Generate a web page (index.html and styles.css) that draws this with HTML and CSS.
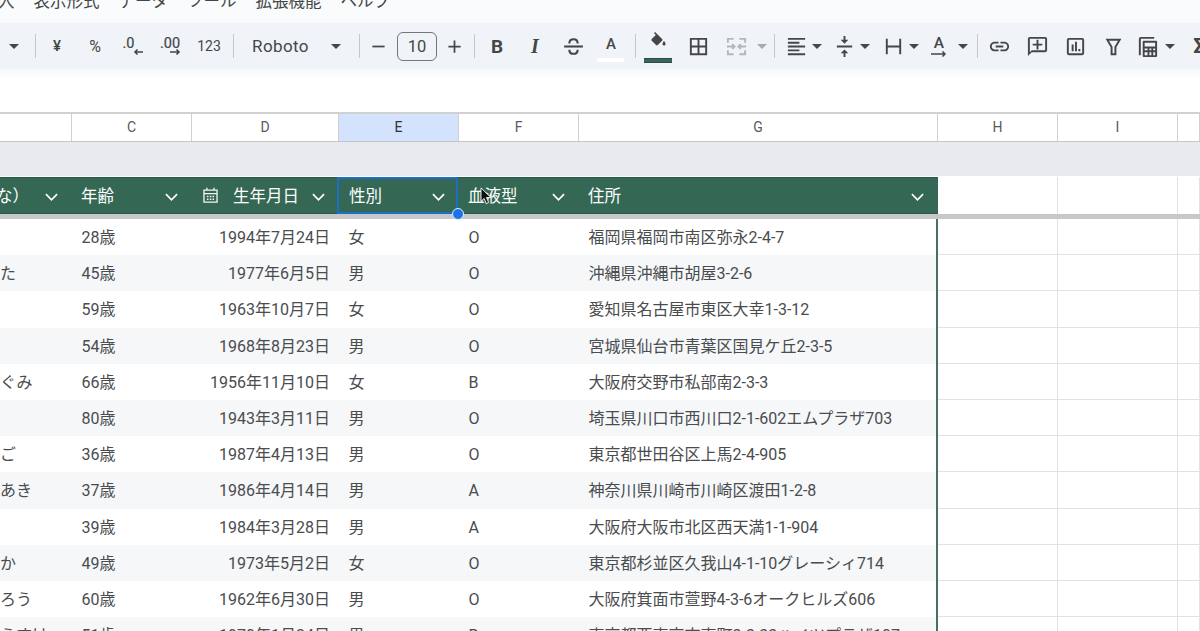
FILE: index.html
```html
<!DOCTYPE html>
<html lang="ja">
<head>
  <meta charset="UTF-8">
  <meta name="viewport" content="width=device-width, initial-scale=1.0">
  <title>スプレッドシート</title>
  <link rel="stylesheet" href="styles.css">
</head>
<body>
  <!-- メニュー -->
  <div class="menubar">
    <span class="menu-first">入</span>
    <span>表示形式</span>
    <span>データ</span>
    <span>ツール</span>
    <span>拡張機能</span>
    <span>ヘルプ</span>
  </div>

  <!-- ツールバー -->
  <div class="toolbar">
    <svg class="caret" viewBox="0 0 12 6"><path d="M0 0h12L6 6z"/></svg>
    <div class="sep ml-15"></div>

    <div class="btn txt-yen">¥</div>
    <div class="btn txt-pct">%</div>
    <div class="btn">
      <svg class="num-ico" viewBox="0 0 24 24">
        <text x="1.500" y="14" class="svg-num">.0</text>
        <path class="line thin" d="M22 18h-8M16.500 15.500L14 18l2.500 2.500"/>
      </svg>
    </div>
    <div class="btn">
      <svg class="num-ico wide" viewBox="0 0 28 24">
        <text x="3" y="14" class="svg-num">.00</text>
        <path class="line thin" d="M13 18h9M19.500 15.500L22 18l-2.500 2.500"/>
      </svg>
    </div>
    <div class="btn txt-num">123</div>
    <div class="sep ml-5"></div>

    <div class="font-name">Roboto</div>
    <svg class="caret" viewBox="0 0 12 6"><path d="M0 0h12L6 6z"/></svg>
    <div class="sep ml-17"></div>

    <div class="btn-minus"><svg class="ico small" viewBox="0 0 24 24"><path d="M5 11h14v2H5z"/></svg></div>
    <div class="size-box">10</div>
    <div class="btn-plus"><svg class="ico small" viewBox="0 0 24 24"><path d="M19 13h-6v6h-2v-6H5v-2h6V5h2v6h6z"/></svg></div>
    <div class="sep ml-3"></div>

    <div class="btn txt-bold">B</div>
    <div class="btn txt-italic">I</div>
    <div class="btn">
      <svg class="ico strike" viewBox="0 0 24 24">
        <path d="M3 11h18v2H3z"/>
        <path class="line" d="M8 9c0-2.500 1.800-4 4-4s4 1.500 4 4M8 15c0 2.500 1.800 4 4 4s4-1.500 4-4"/>
      </svg>
    </div>
    <div class="btn txt-color">
      <span>A</span>
      <i class="white-bar"></i>
    </div>
    <div class="sep ml-5"></div>

    <div class="btn btn-fill">
      <svg class="ico fill-ico" viewBox="0 0 24 24"><path d="M16.560 8.940L7.620 0 6.210 1.410l2.380 2.380-5.150 5.150c-.59.59-.59 1.540 0 2.120l5.500 5.500c.29.29.68.44 1.060.44s.77-.15 1.060-.44l5.500-5.500c.59-.58.59-1.530 0-2.120zM19 11.500s-2 2.170-2 3.500c0 1.100.9 2 2 2s2-.9 2-2c0-1.330-2-3.500-2-3.500z"/></svg>
      <i class="green-bar"></i>
    </div>
    <div class="btn ml-2"><svg class="ico" viewBox="0 0 24 24"><path d="M3 3v18h18V3H3zm8 16H5v-6h6v6zm0-8H5V5h6v6zm8 8h-6v-6h6v6zm0-8h-6V5h6v6z"/></svg></div>
    <div class="btn">
      <svg class="ico off" viewBox="0 0 24 24">
        <path class="line" d="M9 4H3v4M15 4h6v4M9 20H3v-4M15 20h6v-4M3 11v2M21 11v2M4 12h6M7.500 9.500l2.500 2.500-2.500 2.500M20 12h-6M16.500 9.500L14 12l2.500 2.500"/>
      </svg>
    </div>
    <svg class="caret off ml-1" viewBox="0 0 12 6"><path d="M0 0h12L6 6z"/></svg>
    <div class="sep ml-6"></div>

    <div class="btn-narrow ml-5"><svg class="ico" viewBox="0 0 24 24"><path d="M15 15H3v2h12v-2zm0-8H3v2h12V7zM3 13h18v-2H3v2zm0 8h18v-2H3v2zM3 3v2h18V3H3z"/></svg></div>
    <svg class="caret ml-2" viewBox="0 0 12 6"><path d="M0 0h12L6 6z"/></svg>
    <div class="btn-narrow ml-8"><svg class="ico" viewBox="0 0 24 24"><path d="M8 19h3v4h2v-4h3l-4-4-4 4zm8-14h-3V1h-2v4H8l4 4 4-4zM4 11v2h16v-2H4z"/></svg></div>
    <svg class="caret ml-2" viewBox="0 0 12 6"><path d="M0 0h12L6 6z"/></svg>
    <div class="btn-narrow ml-9"><svg class="ico" viewBox="0 0 24 24"><path d="M4 4h2v16H4zM18 4h2v16h-2zM6 11h12v2H6z"/></svg></div>
    <svg class="caret ml-2" viewBox="0 0 12 6"><path d="M0 0h12L6 6z"/></svg>
    <div class="btn-narrow ml-6 txt-rotate">
      <span>A</span>
      <svg class="rotate-arrow" viewBox="0 0 16 6"><path class="line" d="M0 3h14M11.500 .5L14 3l-2.500 2.500"/></svg>
    </div>
    <svg class="caret ml-5" viewBox="0 0 12 6"><path d="M0 0h12L6 6z"/></svg>
    <div class="sep ml-8 tight"></div>

    <div class="btn"><svg class="ico" viewBox="0 0 24 24"><path d="M3.900 12c0-1.710 1.390-3.100 3.100-3.100h4V7H7c-2.760 0-5 2.240-5 5s2.240 5 5 5h4v-1.900H7c-1.710 0-3.100-1.390-3.100-3.100zM8 13h8v-2H8v2zm9-6h-4v1.900h4c1.710 0 3.100 1.390 3.100 3.100s-1.390 3.100-3.100 3.100h-4V17h4c2.760 0 5-2.240 5-5s-2.240-5-5-5z"/></svg></div>
    <div class="btn"><svg class="ico" viewBox="0 0 24 24"><path d="M20 2H4c-1.100 0-2 .9-2 2v18l4-4h14c1.100 0 2-.9 2-2V4c0-1.100-.9-2-2-2zm0 14H6l-2 2V4h16v12z"/><path d="M11 5h2v4h4v2h-4v4h-2v-4H7V9h4z"/></svg></div>
    <div class="btn"><svg class="ico" viewBox="0 0 24 24"><path d="M19 3H5c-1.100 0-2 .9-2 2v14c0 1.100.9 2 2 2h14c1.100 0 2-.9 2-2V5c0-1.100-.9-2-2-2zm0 16H5V5h14v14z"/><path d="M8 10h2v7H8zM11.500 7h2v10h-2zM15 14.500h2V17h-2z"/></svg></div>
    <div class="btn"><svg class="ico" viewBox="0 0 24 24"><path class="line-2" d="M5.500 5h13L14 12.500V20h-4v-7.500z"/></svg></div>
    <div class="btn-narrow ml-2">
      <svg class="ico" viewBox="0 0 24 24">
        <path d="M3 21V4c0-1.100.9-2 2-2h14v2H5v17z"/>
        <path d="M8 6h13c.6 0 1 .4 1 1v15c0 .6-.4 1-1 1H8c-.6 0-1-.4-1-1V7c0-.6.4-1 1-1zm1 2v4h11V8zm0 6v2h3v-2zm5 0v2h2v-2zm4 0v2h2v-2zM9 18v3h3v-3zm5 0v3h2v-3zm4 0v3h2v-3z" fill-rule="evenodd"/>
      </svg>
    </div>
    <svg class="caret ml-4" viewBox="0 0 12 6"><path d="M0 0h12L6 6z"/></svg>
    <div class="btn txt-sigma">Σ</div>
  </div>

  <div class="formula-bar"></div>

  <!-- 列見出し -->
  <div class="cols col-head">
    <div></div>
    <div>C</div>
    <div>D</div>
    <div class="on">E</div>
    <div>F</div>
    <div>G</div>
    <div>H</div>
    <div>I</div>
    <div></div>
  </div>

  <div class="band"></div>

  <!-- テーブル見出し -->
  <div class="cols table-head">
    <div class="th"><span class="cut">な）</span><svg class="chev" viewBox="0 0 14 8"><path d="M1 1l6 6 6-6"/></svg></div>
    <div class="th">年齢<svg class="chev" viewBox="0 0 14 8"><path d="M1 1l6 6 6-6"/></svg></div>
    <div class="th">
      <svg class="cal" viewBox="0 0 16 16"><path d="M2.500 3.500h11v10h-11zM2.500 6.500h11M5 1.500v2M11 1.500v2"/><path class="dots" d="M5 8.800h1.300M7.400 8.800h1.300M9.700 8.800h1.300M5 11.200h1.300M7.400 11.200h1.300M9.700 11.200h1.300"/></svg>
      生年月日<svg class="chev" viewBox="0 0 14 8"><path d="M1 1l6 6 6-6"/></svg>
    </div>
    <div class="th selected">性別<svg class="chev" viewBox="0 0 14 8"><path d="M1 1l6 6 6-6"/></svg><i class="handle"></i></div>
    <div class="th">血液型<svg class="chev" viewBox="0 0 14 8"><path d="M1 1l6 6 6-6"/></svg>
      <svg class="pointer" viewBox="0 0 12 20"><path d="M1 1v15l3.500-3.300 2.300 5.600 2.700-1.100-2.400-5.500H12z"/></svg>
    </div>
    <div class="th">住所<svg class="chev" viewBox="0 0 14 8"><path d="M1 1l6 6 6-6"/></svg></div>
    <div class="th-rest"></div>
    <div class="th-rest"></div>
    <div class="th-rest"></div>
  </div>
  <div class="freeze"></div>

  <!-- データ行 -->
  <div class="rows">
    <div class="cols row">
      <div class="name"></div><div>28歳</div><div class="date">1994年7月24日</div><div>女</div><div>O</div><div class="addr">福岡県福岡市南区弥永2-4-7</div><div class="g"></div><div class="g"></div><div class="g"></div>
    </div>
    <div class="cols row">
      <div class="name">た</div><div>45歳</div><div class="date">1977年6月5日</div><div>男</div><div>O</div><div class="addr">沖縄県沖縄市胡屋3-2-6</div><div class="g"></div><div class="g"></div><div class="g"></div>
    </div>
    <div class="cols row">
      <div class="name"></div><div>59歳</div><div class="date">1963年10月7日</div><div>女</div><div>O</div><div class="addr">愛知県名古屋市東区大幸1-3-12</div><div class="g"></div><div class="g"></div><div class="g"></div>
    </div>
    <div class="cols row">
      <div class="name"></div><div>54歳</div><div class="date">1968年8月23日</div><div>男</div><div>O</div><div class="addr">宮城県仙台市青葉区国見ケ丘2-3-5</div><div class="g"></div><div class="g"></div><div class="g"></div>
    </div>
    <div class="cols row">
      <div class="name">ぐみ</div><div>66歳</div><div class="date">1956年11月10日</div><div>女</div><div>B</div><div class="addr">大阪府交野市私部南2-3-3</div><div class="g"></div><div class="g"></div><div class="g"></div>
    </div>
    <div class="cols row">
      <div class="name"></div><div>80歳</div><div class="date">1943年3月11日</div><div>男</div><div>O</div><div class="addr">埼玉県川口市西川口2-1-602エムプラザ703</div><div class="g"></div><div class="g"></div><div class="g"></div>
    </div>
    <div class="cols row">
      <div class="name">ご</div><div>36歳</div><div class="date">1987年4月13日</div><div>男</div><div>O</div><div class="addr">東京都世田谷区上馬2-4-905</div><div class="g"></div><div class="g"></div><div class="g"></div>
    </div>
    <div class="cols row">
      <div class="name">あき</div><div>37歳</div><div class="date">1986年4月14日</div><div>男</div><div>A</div><div class="addr">神奈川県川崎市川崎区渡田1-2-8</div><div class="g"></div><div class="g"></div><div class="g"></div>
    </div>
    <div class="cols row">
      <div class="name"></div><div>39歳</div><div class="date">1984年3月28日</div><div>男</div><div>A</div><div class="addr">大阪府大阪市北区西天満1-1-904</div><div class="g"></div><div class="g"></div><div class="g"></div>
    </div>
    <div class="cols row">
      <div class="name">か</div><div>49歳</div><div class="date">1973年5月2日</div><div>女</div><div>O</div><div class="addr">東京都杉並区久我山4-1-10グレーシィ714</div><div class="g"></div><div class="g"></div><div class="g"></div>
    </div>
    <div class="cols row">
      <div class="name">ろう</div><div>60歳</div><div class="date">1962年6月30日</div><div>男</div><div>O</div><div class="addr">大阪府箕面市萱野4-3-6オークヒルズ606</div><div class="g"></div><div class="g"></div><div class="g"></div>
    </div>
    <div class="cols row">
      <div class="name">うすけ</div><div>51歳</div><div class="date">1970年1月24日</div><div>男</div><div>B</div><div class="addr">東京都西東京市東町3-3-33ハイツプラザ107</div><div class="g"></div><div class="g"></div><div class="g"></div>
    </div>
  </div>
</body>
</html>
```

FILE: styles.css
```css
* {
  box-sizing: border-box;
}

html, body {
  height: 100%;
}

body {
  margin: 0;
  overflow: hidden;
  background: #fff;
  color: #444746;
  font-family: Roboto, "Noto Sans CJK JP", sans-serif;
}

/* メニュー */
.menubar {
  display: flex;
  align-items: flex-end;
  gap: 19px;
  height: 23px;
  padding-bottom: 11px;
  overflow: hidden;
  background: #f9fbfd;
  font-size: 16.500px;
  line-height: 20px;
}

.menu-first {
  margin-left: -2px;
}

/* ツールバー */
.toolbar {
  display: flex;
  align-items: center;
  height: 46px;
  padding-left: 8px;
  overflow: hidden;
  background: #f0f4f9;
}

.toolbar svg {
  flex: none;
  fill: #444746;
}

.toolbar .line,
.toolbar .line-2 {
  fill: none;
  stroke: #444746;
  stroke-width: 2;
}

.toolbar .line.thin {
  stroke-width: 1.600;
}

.caret {
  width: 12px;
  height: 5px;
  padding: 0 1px;
}

.off.caret path {
  fill: #a8abae;
}

.toolbar .off .line {
  stroke: #b4b7ba;
}

.sep {
  flex: none;
  width: 1px;
  height: 24px;
  margin-right: 3px;
  background: #c7c7c7;
}

.sep.tight {
  margin-right: 2px;
}

.ml-1 { margin-left: 1px; }
.ml-2 { margin-left: 2px; }
.ml-3 { margin-left: 3px; }
.ml-4 { margin-left: 4px; }
.ml-5 { margin-left: 5px; }
.ml-6 { margin-left: 6px; }
.ml-8 { margin-left: 8px; }
.ml-9 { margin-left: 9px; }
.ml-15 { margin-left: 15px; margin-right: 2px; }
.ml-17 { margin-left: 17px; margin-right: 2px; }

.btn,
.btn-narrow,
.btn-minus,
.btn-plus {
  position: relative;
  flex: none;
  display: flex;
  align-items: center;
  justify-content: center;
  width: 38px;
  height: 34px;
}

.btn-narrow {
  width: 26px;
}

.btn-minus {
  width: 32px;
}

.btn-plus {
  width: 34px;
}

.ico {
  width: 23px;
  height: 23px;
}

.ico.small {
  width: 21px;
  height: 21px;
}

.ico.strike {
  width: 25px;
  height: 25px;
}

.num-ico {
  width: 24px;
  height: 24px;
}

.num-ico.wide {
  width: 28px;
}

.svg-num {
  font-size: 14.500px;
  fill: #444746;
  stroke: #444746;
  stroke-width: 0.200;
}

.txt-yen {
  font-size: 15px;
  font-weight: 500;
}

.txt-pct {
  font-size: 16px;
}

.txt-num {
  font-size: 14px;
}

.font-name {
  flex: none;
  width: 78px;
  margin-left: 15px;
  font-size: 17px;
  letter-spacing: 0.4px;
}

.size-box {
  flex: none;
  width: 40px;
  height: 29px;
  margin-left: 3px;
  border: 1px solid #747775;
  border-radius: 6px;
  font-size: 16.500px;
  line-height: 27px;
  text-align: center;
}

.txt-bold {
  font-size: 19px;
  font-weight: 700;
}

.txt-italic {
  font-family: "Liberation Serif", serif;
  font-size: 20px;
  font-style: italic;
  font-weight: 700;
}

.txt-color {
  flex-direction: column;
  font-size: 15px;
  font-weight: 500;
  line-height: 16px;
}

.txt-color span {
  margin-top: -4px;
}

.white-bar {
  position: absolute;
  left: 5px;
  top: 29px;
  width: 27px;
  height: 4px;
  background: #fff;
}

.toolbar .fill-ico {
  position: absolute;
  left: 10px;
  top: 3px;
  width: 19px;
  height: 19px;
}

.green-bar {
  position: absolute;
  left: 5px;
  top: 29px;
  width: 28px;
  height: 5px;
  border-top: 1px solid #33484a;
  border-bottom: 1px solid #33484a;
  background: #356854;
}

.txt-rotate {
  flex-direction: column;
  font-size: 15.500px;
  font-weight: 500;
  line-height: 15px;
}

.rotate-arrow {
  width: 16px;
  height: 6px;
}

.toolbar .rotate-arrow .line {
  stroke-width: 1.500;
}

.txt-sigma {
  padding-left: 8px;
  font-size: 20px;
  font-weight: 700;
}

.formula-bar {
  height: 43px;
  background: linear-gradient(#f5f8fb, #fff 9px);
}

/* 列 */
.cols {
  display: grid;
  grid-template-columns: 72px 120px 147px 120px 120px 359px 120px 120px 22px;
}

.col-head {
  height: 30px;
  border-top: 2px solid #d0d2d2;
  border-bottom: 1px solid #c4c7c5;
  font-size: 14px;
  line-height: 27px;
  text-align: center;
  color: #575a5c;
}

.col-head div {
  border-right: 1px solid #cfd1d1;
}

.col-head .on {
  background: #d3e3fd;
  color: #2d3136;
}

.band {
  height: 35px;
  border-bottom: 1px solid #fff;
  background: #e8eaed;
}

/* テーブル見出し */
.table-head {
  height: 37px;
  grid-template-rows: 37px;
  font-size: 16.500px;
  line-height: 1;
  color: #fff;
}

.th {
  position: relative;
  display: flex;
  align-items: center;
  padding-top: 4px;
  padding-left: 9px;
  background: #356854;
  border-top: 1px solid #2c5a48;
  border-bottom: 1px solid #2c5a48;
}

.th-rest {
  border-right: 1px solid #e1e3e3;
}

.cut {
  margin-left: -13px;
}

.chev {
  position: absolute;
  right: 14px;
  top: 15px;
  width: 13px;
  height: 8px;
  fill: none;
  stroke: #fff;
  stroke-width: 1.800;
}

.cal {
  width: 19px;
  height: 19px;
  margin-top: -4px;
  margin-right: 13px;
  fill: none;
  stroke: #f2f6f4;
  stroke-width: 1.100;
}

.cal .dots {
  stroke-width: 1.200;
}

.selected {
  margin-left: -2px;
  margin-right: 1px;
  padding-left: 10px;
  border: 2px solid #1c6fc4;
}

.selected .chev {
  right: 11.500px;
  top: 14px;
}

.selected + .th {
  margin-left: -1px;
  padding-left: 10px;
}

.handle {
  position: absolute;
  right: -8px;
  bottom: -8px;
  z-index: 2;
  width: 12px;
  height: 12px;
  border: 1px solid #e8f0fe;
  border-radius: 50%;
  background: #1a73e8;
}

.pointer {
  position: absolute;
  left: 22px;
  top: 9px;
  z-index: 2;
  width: 11px;
  height: 18px;
  fill: #111;
  stroke: #fff;
  stroke-width: 1;
}

.freeze {
  height: 5px;
  background: #c8c8c8;
}

/* データ行 */
.row {
  height: 36.200px;
  grid-template-rows: 36.200px;
  font-size: 16px;
  line-height: 38px;
  color: #4a4c4e;
}

.row div {
  padding-left: 9.500px;
  white-space: nowrap;
  overflow: hidden;
}

.row:nth-child(even) div {
  background: #f5f7f9;
}

.row .name {
  padding-left: 0;
}

.row .date {
  padding: 0 9px 0 0;
  text-align: right;
}

.row .addr {
  border-right: 2px solid #4a6f60;
}

.row .g,
.row:nth-child(even) .g {
  background: #fff;
  border-right: 1px solid #e1e3e3;
  border-bottom: 1px solid #e1e3e3;
}
```
